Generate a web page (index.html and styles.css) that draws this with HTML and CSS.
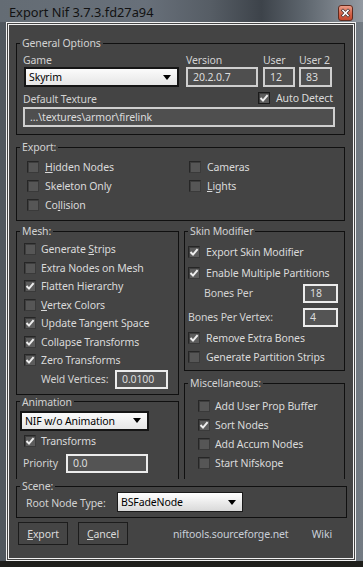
FILE: index.html
```html
<!DOCTYPE html>
<html>
<head>
<meta charset="utf-8">
<link rel="stylesheet" href="styles.css">
</head>
<body>
<div class="window">
  <div class="titlebar">
    <span class="title">Export Nif 3.7.3.fd27a94</span>
    <span class="close"><svg width="15" height="16" viewBox="0 0 15 16"><defs><linearGradient id="cg" x1="0" y1="0" x2="0" y2="1"><stop offset="0" stop-color="#eba08c"/><stop offset="0.5" stop-color="#d4664c"/><stop offset="1" stop-color="#c4452a"/></linearGradient></defs><rect x="0.5" y="0.5" width="14" height="15" rx="2.5" fill="url(#cg)" stroke="#5c2a1e"/><path d="M5 5.5 L10 10.5 M10 5.5 L5 10.5" stroke="#3a2a28" stroke-width="3" stroke-linecap="square"/><path d="M5 5.5 L10 10.5 M10 5.5 L5 10.5" stroke="#ffffff" stroke-width="1.6" stroke-linecap="square"/></svg></span>
  </div>
  <div class="frame">
    <fieldset class="group general">
      <legend>General Options</legend>
      <div class="gen-row1">
        <div class="field f-game"><span class="lbl">Game</span><div class="select light game-sel"><span>Skyrim</span><i class="arrow"></i></div></div>
        <div class="field f-ver"><span class="lbl">Version</span><div class="input">20.2.0.7</div></div>
        <div class="field f-user"><span class="lbl">User</span><div class="input">12</div></div>
        <div class="field f-user2"><span class="lbl">User 2</span><div class="input">83</div></div>
      </div>
      <div class="gen-row2">
        <span class="lbl tex-lbl">Default Texture</span>
        <div class="check on auto"><span class="box"><svg width="12" height="12" viewBox="0 0 12 12"><path d="M2.5 6 L5 8.6 L9.6 3.2" fill="none" stroke="#eeeeee" stroke-width="2"/></svg></span><span>Auto Detect</span></div>
      </div>
      <div class="input tex">…\textures\armor\firelink</div>
    </fieldset>

    <fieldset class="group export">
      <legend>Export:</legend>
      <div class="export-body">
        <div class="col-a">
          <div class="check"><span class="box"></span><span><u>H</u>idden Nodes</span></div>
          <div class="check"><span class="box"></span><span>Skeleton Only</span></div>
          <div class="check"><span class="box"></span><span>Co<u>l</u>lision</span></div>
        </div>
        <div class="col-b">
          <div class="check"><span class="box"></span><span>Cameras</span></div>
          <div class="check"><span class="box"></span><span><u>L</u>ights</span></div>
        </div>
      </div>
    </fieldset>

    <div class="columns">
      <div class="left">
        <fieldset class="group mesh">
          <legend>Mesh:</legend>
          <div class="mesh-body">
            <div class="check r"><span class="box"></span><span>Generate <u>S</u>trips</span></div>
            <div class="check r"><span class="box"></span><span>Extra Nodes on Mesh</span></div>
            <div class="check r on"><span class="box"><svg width="12" height="12" viewBox="0 0 12 12"><path d="M2.5 6 L5 8.6 L9.6 3.2" fill="none" stroke="#eeeeee" stroke-width="2"/></svg></span><span>Flatten Hierarchy</span></div>
            <div class="check r"><span class="box"></span><span><u>V</u>ertex Colors</span></div>
            <div class="check r on"><span class="box"><svg width="12" height="12" viewBox="0 0 12 12"><path d="M2.5 6 L5 8.6 L9.6 3.2" fill="none" stroke="#eeeeee" stroke-width="2"/></svg></span><span>Update Tangent Space</span></div>
            <div class="check r on"><span class="box"><svg width="12" height="12" viewBox="0 0 12 12"><path d="M2.5 6 L5 8.6 L9.6 3.2" fill="none" stroke="#eeeeee" stroke-width="2"/></svg></span><span>Collapse Transforms</span></div>
            <div class="check r on"><span class="box"><svg width="12" height="12" viewBox="0 0 12 12"><path d="M2.5 6 L5 8.6 L9.6 3.2" fill="none" stroke="#eeeeee" stroke-width="2"/></svg></span><span>Zero Transforms</span></div>
            <div class="weld-row"><span class="lbl weld-lbl">Weld Vertices:</span><div class="input bright weld">0.0100</div></div>
          </div>
        </fieldset>
        <fieldset class="group anim open">
          <legend>Animation</legend>
          <div class="anim-body">
            <div class="select light anim-sel"><span>NIF w/o Animation</span><i class="arrow"></i></div>
            <div class="check on trans"><span class="box"><svg width="12" height="12" viewBox="0 0 12 12"><path d="M2.5 6 L5 8.6 L9.6 3.2" fill="none" stroke="#eeeeee" stroke-width="2"/></svg></span><span>Transforms</span></div>
            <div class="prio-row"><span class="lbl prio-lbl">Priority</span><div class="input bright prio">0.0</div></div>
          </div>
        </fieldset>
      </div>
      <div class="right">
        <fieldset class="group skin">
          <legend>Skin Modifier</legend>
          <div class="skin-body">
            <div class="check on s1"><span class="box"><svg width="12" height="12" viewBox="0 0 12 12"><path d="M2.5 6 L5 8.6 L9.6 3.2" fill="none" stroke="#eeeeee" stroke-width="2"/></svg></span><span>Export Skin Modifier</span></div>
            <div class="check on s2"><span class="box"><svg width="12" height="12" viewBox="0 0 12 12"><path d="M2.5 6 L5 8.6 L9.6 3.2" fill="none" stroke="#eeeeee" stroke-width="2"/></svg></span><span>Enable Multiple Partitions</span></div>
            <div class="num-row bp"><span class="lbl">Bones Per</span><div class="input bright num">18</div></div>
            <div class="num-row bpv"><span class="lbl">Bones Per Vertex:</span><div class="input bright num">4</div></div>
            <div class="check on s3"><span class="box"><svg width="12" height="12" viewBox="0 0 12 12"><path d="M2.5 6 L5 8.6 L9.6 3.2" fill="none" stroke="#eeeeee" stroke-width="2"/></svg></span><span>Remove Extra Bones</span></div>
            <div class="check s4"><span class="box"></span><span>Generate Partition Strips</span></div>
          </div>
        </fieldset>
        <fieldset class="group misc open">
          <legend>Miscellaneous:</legend>
          <div class="misc-body">
            <div class="check"><span class="box"></span><span>Add User Prop Buffer</span></div>
            <div class="check on"><span class="box"><svg width="12" height="12" viewBox="0 0 12 12"><path d="M2.5 6 L5 8.6 L9.6 3.2" fill="none" stroke="#eeeeee" stroke-width="2"/></svg></span><span>Sort Nodes</span></div>
            <div class="check"><span class="box"></span><span>Add Accum Nodes</span></div>
            <div class="check"><span class="box"></span><span>Start Nifskope</span></div>
          </div>
        </fieldset>
      </div>
    </div>

    <fieldset class="group scene">
      <legend>Scene:</legend>
      <div class="scene-row"><span class="lbl root-lbl">Root Node Type:</span><div class="select light grad root-sel"><span>BSFadeNode</span><i class="arrow"></i></div></div>
    </fieldset>

    <div class="footer">
      <div class="btn"><u>E</u>xport</div>
      <div class="btn cancel"><u>C</u>ancel</div>
      <span class="link">niftools.sourceforge.net</span>
      <span class="link wiki">Wiki</span>
    </div>
  </div>
</div>
</body>
</html>
```
FILE: styles.css
```css
* { box-sizing: border-box; }
body {
  margin: 0;
  background: #1f1f1c;
  font-family: "Noto Sans", "Open Sans", sans-serif;
  font-size: 10.5px;
  letter-spacing: -0.12px;
  line-height: 14px;
  color: #d6d6d6;
}
.window {
  width: 363px;
  height: 567px;
  overflow: hidden;
  display: flex;
  flex-direction: column;
  background:
    linear-gradient(to bottom, transparent 561px, #1e1e1b 561px),
    linear-gradient(90deg, #4f565d 0%, #5d656d 60%, #737b83 100%);
}
.titlebar {
  height: 22px;
  flex: none;
  display: flex;
  align-items: center;
  padding: 0 10px 0 9px;
  color: #121212;
  font-size: 12.8px;
  letter-spacing: 0;
  background: linear-gradient(90deg, #646c74 0%, #68707a 40%, #565d65 58%, #3d434a 72%, #5e666e 84%, #939aa2 100%);
}
.title { flex: 1; padding-top: 1px; }
.close { display: flex; width: 15px; height: 16px; margin-top: 3px; }
.frame {
  margin: 0 7px 0 6px;
  height: 539px;
  flex: none;
  border: 3px double #f2f2f2;
  background: #444444;
  padding: 11px 8px 0 7px;
  display: flex;
  flex-direction: column;
}
.group {
  margin: 0;
  padding: 0;
  border: 1px solid #101010;
  min-width: 0;
}
.group.open { border-bottom: none; }
legend {
  margin-left: 3px;
  padding: 0 2px;
  line-height: 14px;
  color: #d2d2d2;
}
.lbl { color: #d2d2d2; white-space: nowrap; }

/* inputs */
.input {
  height: 20px;
  border: 2px solid #cfcfcf;
  background: #4f4f4f;
  color: #dcdcdc;
  padding: 0 0 0 5px;
  line-height: 16px;
  white-space: nowrap;
  overflow: hidden;
}
.input.bright { border-color: #ececec; background: #545454; }
.select {
  height: 20px;
  display: flex;
  align-items: center;
  justify-content: space-between;
  padding: 0 6px 0 3px;
  color: #000;
}
.select.light {
  background: linear-gradient(#fbfbfb, #e6e6e6);
  border: 2px solid #151515;
}
.select.grad { background: linear-gradient(#ffffff, #d9d9d9); border-width: 1px; border-color: #1a1a1a; }
.arrow {
  width: 0; height: 0;
  border-left: 4px solid transparent;
  border-right: 4px solid transparent;
  border-top: 5px solid #000;
}

/* checkbox */
.check {
  display: flex;
  align-items: center;
  height: 19px;
  gap: 5px;
  color: #dadada;
  white-space: nowrap;
}
.box {
  width: 12px;
  height: 12px;
  flex: none;
  display: flex;
  border: 1px solid #262626;
  border-right-color: #3a3a3a;
  border-bottom-color: #3a3a3a;
  background: #565656;
  box-shadow: inset 1px 1px 0 #3e3e3e;
}
.box svg { margin: -1px; }
.check.on .box { background: #5c5c5c; }

/* general */
.general { flex: none; }
.gen-row1 { display: flex; padding: 3px 0 0 6px; }
.field { display: flex; flex-direction: column; }
.field .lbl { height: 14px; }
.f-game { width: 156px; margin-right: 7px; }
.f-ver { width: 72px; margin-right: 5px; }
.f-user { width: 32px; margin-right: 4px; }
.f-user2 { width: 33px; }
.game-sel { margin-left: 1px; }
.gen-row2 { display: flex; align-items: center; height: 14px; margin-top: 4px; padding-left: 6px; }
.tex-lbl { flex: 0 0 235px; margin-top: 2px; }
.auto { height: 14px; gap: 6px; }
.auto .box { background: #2e2e2e; border-color: #1a1a1a; }
.tex { margin: 2px 0 7px 6px; width: 312px; }

/* export */
.export { flex: none; margin-top: 5px; }
.export-body { display: flex; padding: 3px 0 6px 10px; }
.col-a { width: 162px; }
.export .check { gap: 6px; }

/* columns */
.columns { display: flex; gap: 5px; height: 255px; flex: none; margin-top: 3px; }
.left { width: 163px; display: flex; flex-direction: column; }
.right { width: 161px; display: flex; flex-direction: column; }
.mesh { flex: none; }
.mesh-body { padding: 2px 0 5px 7px; }
.check.r { height: 18.5px; }
.weld-row { display: flex; align-items: center; height: 19px; padding-left: 17px; }
.weld-lbl { width: 74px; }
.weld { width: 53px; height: 19px; line-height: 15px; }
.anim { flex: 1; }
.anim-body { padding: 2px 0 0 0; }
.anim-sel { margin-left: 3px; width: 129px; }
.trans { margin: 1px 0 0 7px; }
.prio-row { display: flex; align-items: center; margin-top: 3px; padding-left: 6px; height: 19px; }
.prio-lbl { width: 43px; }
.prio { width: 82px; height: 19px; line-height: 15px; }

.skin { flex: none; }
.skin-body { padding: 4px 0 4px 3px; }
.skin .check { gap: 6px; }
.s1 { height: 20px; }
.s2 { height: 21px; }
.num-row { display: flex; align-items: center; justify-content: space-between; height: 20px; padding-right: 6px; }
.bp { padding-left: 16px; }
.bpv { margin-top: 4px; }
.num { width: 35px; height: 19px; line-height: 15px; }
.s3 { margin-top: 1px; }
.misc { flex: 1; margin-top: 5px; }
.misc-body { padding: 6px 0 0 13px; }

/* scene */
.scene { flex: none; margin-right: -2px; }
.scene-row { display: flex; align-items: center; height: 20px; margin: -1px 0 5px 0; padding-left: 9px; }
.root-lbl { width: 91px; margin-top: 2px; }
.root-sel { width: 126px; }

/* footer */
.footer { display: flex; align-items: center; margin: 4px 0 0 2px; height: 23px; }
.btn {
  width: 50px;
  height: 23px;
  border: 1px solid #1c1c1c;
  background: #454545;
  color: #dadada;
  display: flex;
  align-items: center;
  justify-content: center;
}
.cancel { margin-left: 10px; }
.link { color: #c9cfd8; margin-left: 45px; }
.wiki { margin-left: auto; margin-right: 13px; }
```
